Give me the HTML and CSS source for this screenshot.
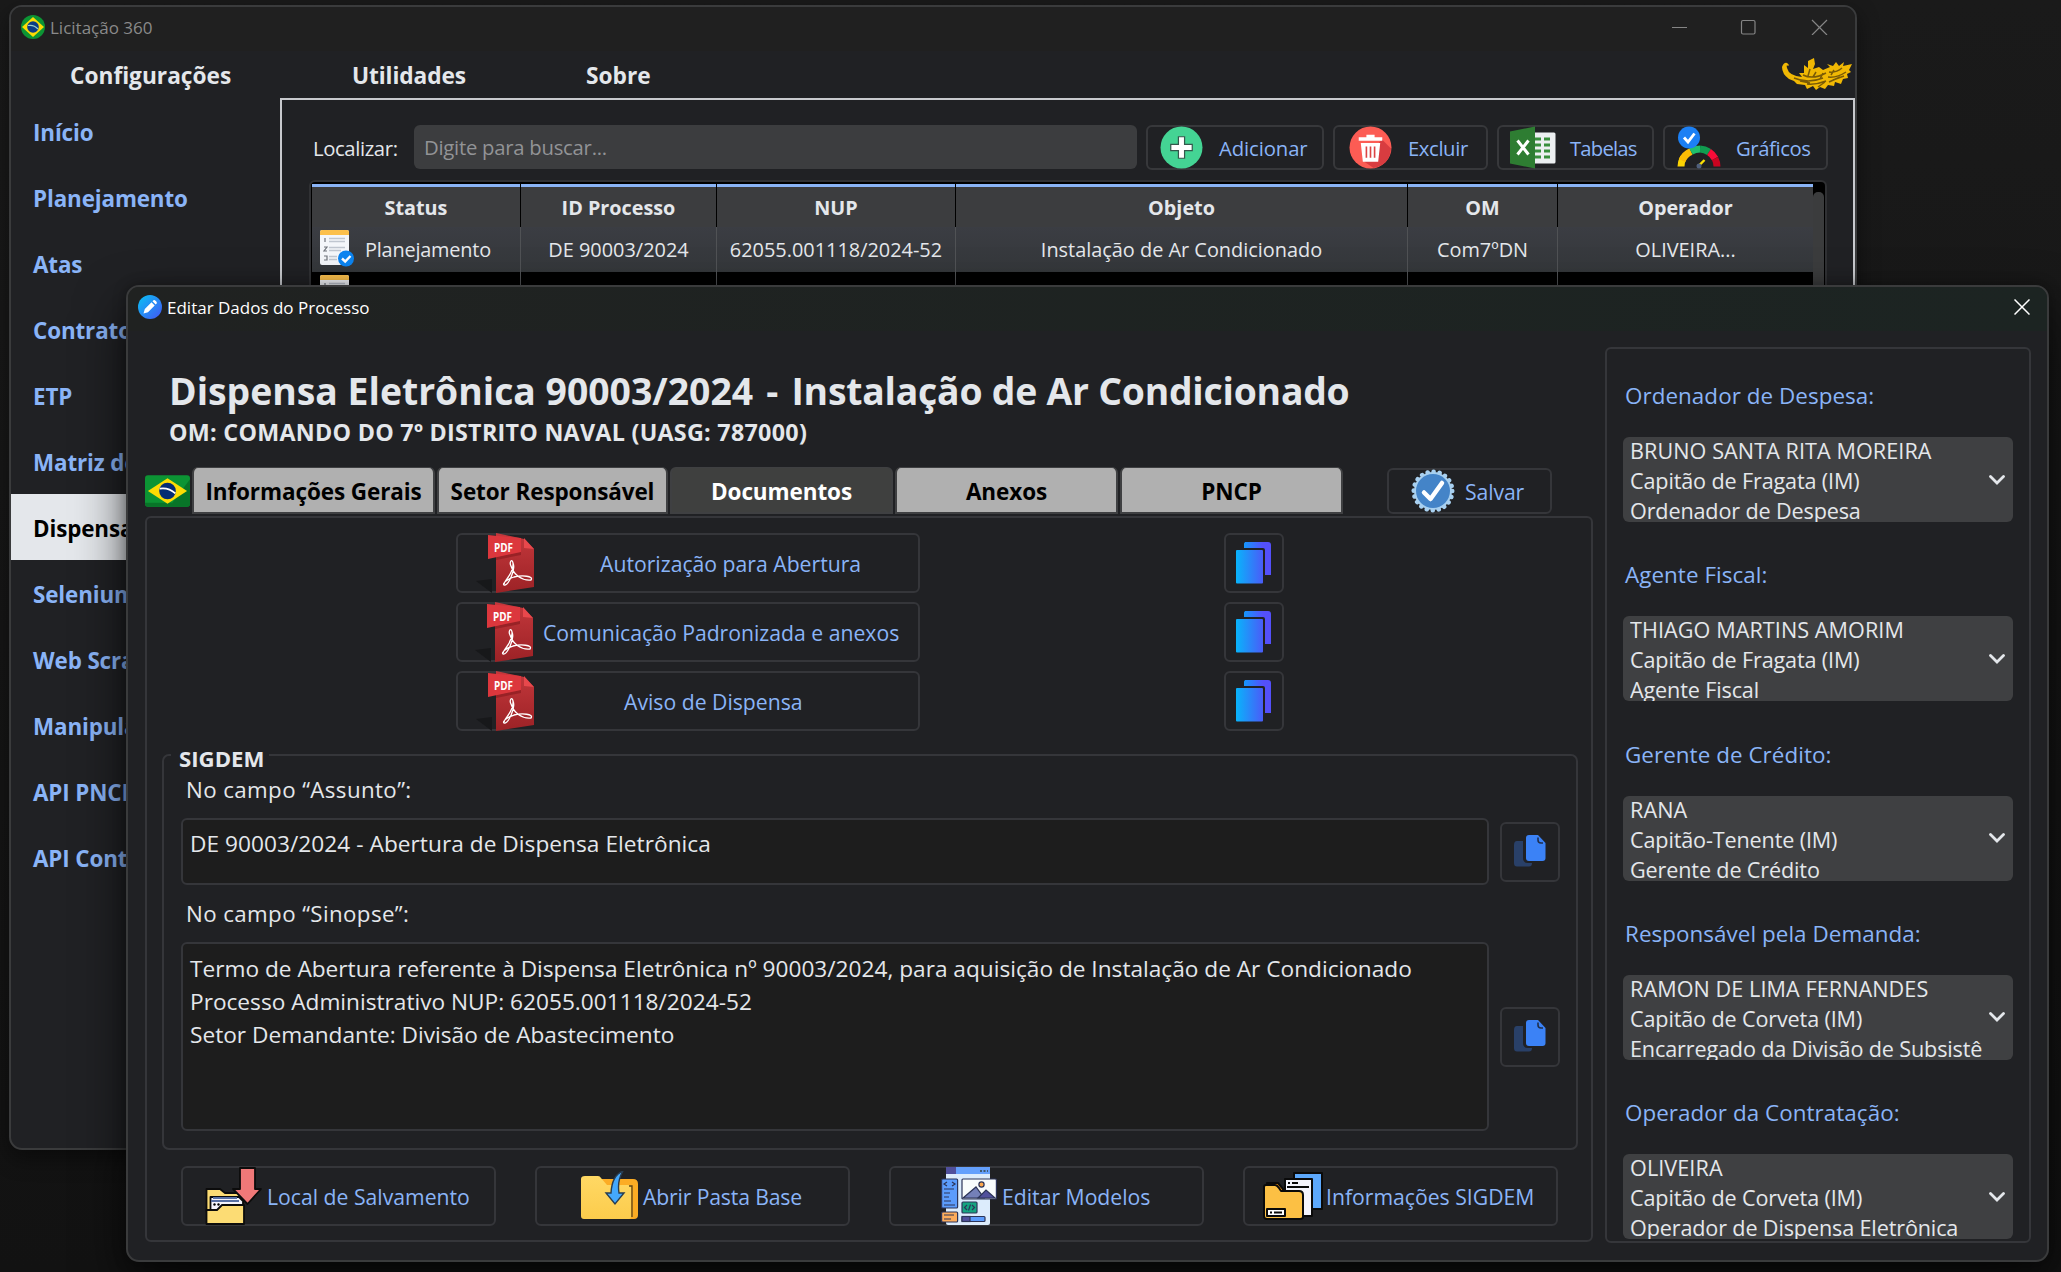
FILE: index.html
```html
<!DOCTYPE html>
<html lang="pt-BR">
<head>
<meta charset="utf-8">
<title>Licitação 360</title>
<link rel="stylesheet" href="styles.css">
</head>
<body>
<svg class="defs" width="0" height="0" aria-hidden="true">
  <defs>
    <linearGradient id="gPdf" x1="0" y1="0" x2="0" y2="1"><stop offset="0" stop-color="#c4383c"/><stop offset="1" stop-color="#9c2226"/></linearGradient>
    <linearGradient id="gCopy" x1="0" y1="0" x2="1" y2="0"><stop offset="0" stop-color="#08b4fb"/><stop offset="1" stop-color="#4a5cf8"/></linearGradient>
    <linearGradient id="gCopyBack" x1="0" y1="0" x2="1" y2="0"><stop offset="0" stop-color="#1496fb"/><stop offset=".7" stop-color="#5450fa"/></linearGradient>
    <linearGradient id="gPen" x1="0" y1="0" x2="1" y2="1"><stop offset="0" stop-color="#08c4f4"/><stop offset="1" stop-color="#4454f4"/></linearGradient>
    <linearGradient id="gFolder" x1="0" y1="0" x2="0" y2="1"><stop offset="0" stop-color="#ffd864"/><stop offset="1" stop-color="#fccc4c"/></linearGradient>
  </defs>
  <symbol id="pdf" viewBox="0 0 60 60">
    <path d="M0 48L16 46V60Z" fill="#17181a"/>
    <path d="M20 0L48 6L58 16V54L20 60Z" fill="url(#gPdf)"/>
    <path d="M48 5L58 16L48 15Z" fill="#e8484c"/>
    <path d="M20 24L45 18V22L20 27Z" fill="#982226"/>
    <path d="M12 2L45 5V19L12 26Z" fill="#dc373d"/>
    <text x="27.500" y="18.500" text-anchor="middle" font-family="Open Sans" font-size="12" font-weight="700" fill="#fff" textLength="19" lengthAdjust="spacingAndGlyphs">PDF</text>
    <path d="M28 51C29 46 38 41 37 30C36 25 33 29 35 33C38 42 46 48 55 47C58 43 46 42 38 44C31 46 26 51 28 52C32 53 40 37 37 30" fill="none" stroke="#fff" stroke-width="1.300"/>
  </symbol>
  <symbol id="pages" viewBox="0 0 36 42">
    <path d="M9 0H32Q35 0 35 3V33H29V8Q29 6 27 6H8V1.500Z" fill="url(#gCopyBack)"/>
    <rect x="0" y="8" width="27" height="33.500" rx="1" fill="url(#gCopy)"/>
  </symbol>
  <symbol id="copy" viewBox="0 0 32 32">
    <path d="M3 6H9V23Q9 28 14 28H18Q18 31.500 15 31.500H3Q0 31.500 0 28V10Q0 6 3 6Z" fill="#294068"/>
    <path d="M15 0H24L31.500 8V23Q31.500 26 28.500 26H15Q12 26 12 23V3Q12 0 15 0Z" fill="#3b82f6"/>
    <path d="M24 2.500V5Q24 8 27 8H29" fill="none" stroke="#202f4c" stroke-width="1.600"/>
  </symbol>
  <symbol id="list" viewBox="0 0 35 37">
    <rect width="29" height="35" rx="2" fill="#f4f6fa"/>
    <path d="M0 2Q0 0 2 0H27Q29 0 29 2V5H0Z" fill="#fcc04c"/>
    <path d="M5 8V12M4 17H7L4 21H7M4 26H7V30H4" stroke="#70747c" stroke-width="1.200" fill="none"/>
    <path d="M9 8.500H25M9 11.500H25M9 17.500H25M9 20.500H21M9 26.500H17M9 29.500H17" stroke="#c0c6d0" stroke-width="1.400"/>
    <circle cx="26" cy="28.500" r="8" fill="#0c84f0"/>
    <path d="M22 28.500L25.200 31.500L30.500 26" fill="none" stroke="#fff" stroke-width="2.400"/>
  </symbol>
  <symbol id="chevron" viewBox="0 0 16 10"><path d="M1.500 1.500L8 8L14.500 1.500" fill="none" stroke="#e4e7eb" stroke-width="2.800" stroke-linecap="round"/></symbol>
  <symbol id="flagmark" viewBox="0 0 46 32">
    <path d="M23 3L43 16L23 29L3 16Z" fill="#fcdc04"/>
    <circle cx="23" cy="16" r="8.500" fill="#042c74"/>
    <path d="M15 13.500Q24 12 31 18.500" fill="none" stroke="#fff" stroke-width="1.800"/>
  </symbol>
</svg>

<main class="desktop">
  <section class="window main-window">
    <header class="titlebar">
      <svg class="app-icon" viewBox="0 0 24 24"><circle cx="12" cy="12" r="12" fill="#0c9434"/><path d="M12 2L23 12L12 22L1 12Z" fill="#fcdc04"/><circle cx="12" cy="12" r="5.800" fill="#0c3c84"/><path d="M7 10.500Q13 9.500 17 14" fill="none" stroke="#9cc" stroke-width="1.200"/></svg>
      <span class="title muted">Licitação 360</span>
      <svg class="win-controls" viewBox="0 0 158 16"><path d="M1 8.500H16M141 1L156 16M156 1L141 16" stroke="#858585" stroke-width="1.200"/><rect x="70.500" y="1.500" width="13.500" height="13.500" rx="1.500" fill="none" stroke="#858585" stroke-width="1.200"/></svg>
    </header>
    <nav class="menu">
      <span class="menu-config">Configurações</span><span class="menu-util">Utilidades</span><span class="menu-about">Sobre</span>
      <svg class="crest" viewBox="0 0 71 32">
        <path d="M6 8Q4 6 5 10Q7 18 20 19L17 15L22 15L22 7L26 10L26 3L32 0L33 6L31 11L37 9L41 12L48 9L45 6L51 8L54 4L57 8L62 4L61 8L70 6L67 12L69 14L65 16L66 20L61 21L59 26L53 24L52 28L46 27L43 31L38 29L34 32L31 28L25 31L23 27L15 26L12 23L7 21Q0 16 0 9Q2 4 5 5Q8 7 6 8Z" fill="#f0b804"/>
        <path d="M12 20Q26 26 41 20M21 17Q31 22 44 15M28 11L26 18M34 14L31 19M41 15L38 21M47 14Q54 15 60 10M46 19Q55 20 64 14M25 26Q34 27 44 23M36 29L43 24M47 24L58 19M52 12L49 17M18 23L28 25M51 22L62 18" fill="none" stroke="#795a06" stroke-width="1.500"/>
      </svg>
    </nav>
    <div class="main-body">
      <aside class="sidebar">
        <a>Início</a><a>Planejamento</a><a>Atas</a><a>Contratos</a><a>ETP</a><a>Matriz de</a><a class="active">Dispensa</a><a>Selenium</a><a>Web Scraping</a><a>Manipular</a><a>API PNCP</a><a>API Contratos</a>
      </aside>
      <div class="content">
        <div class="toolbar">
          <label>Localizar:</label>
          <div class="search">Digite para buscar...</div>
          <button class="tool t-add">
            <svg viewBox="0 0 42 42"><circle cx="21" cy="21" r="20.500" fill="#44d494"/><path d="M18 10.500H24V18H31.500V24H24V31.500H18V24H10.500V18H18Z" fill="#fff" stroke="#34584c" stroke-width="1.200"/></svg>
            <span>Adicionar</span></button>
          <button class="tool t-del">
            <svg viewBox="0 0 42 42"><circle cx="21" cy="21" r="20.500" fill="#fc5c54"/><path d="M32 13L41 22Q40 38 24 41L15 35Z" fill="#d83c40"/><path d="M9.500 11H17V8.500H25V11H32.500V14.500H9.500ZM11.500 16.500H30.500L28.500 35H13.500Z" fill="#fff"/><path d="M17 20V31M21 20V31M25 20V31" stroke="#dc4444" stroke-width="1.600"/></svg>
            <span>Excluir</span></button>
          <button class="tool t-tab">
            <svg viewBox="0 0 46 42"><rect x="20" y="6" width="25.500" height="31" rx="1.500" fill="#eceff1"/><path d="M0 5L25 0V42L0 37Z" fill="#2e7d32"/><path d="M7.500 14L18.500 28M18.500 14L7.500 28" stroke="#fff" stroke-width="3"/><path d="M25 12.500H31M34 12.500H40M25 18.500H31M34 18.500H40M25 24.500H31M34 24.500H40M25 30.500H31M34 30.500H40" stroke="#388e3c" stroke-width="3"/></svg>
            <span>Tabelas</span></button>
          <button class="tool t-gra">
            <svg viewBox="0 0 44 42"><g fill="none" stroke-width="7"><path d="M4 40A18 18 0 0 1 6.500 31" stroke="#fcd404"/><path d="M5 34A18 18 0 0 1 14 25" stroke="#fcbc04"/><path d="M14 25A18 18 0 0 1 23 22.500" stroke="#20c06c"/><path d="M23 22.500A18 18 0 0 1 32 25.500" stroke="#109c50"/><path d="M32 25.500A18 18 0 0 1 38 32" stroke="#f80c38"/><path d="M38 32A18 18 0 0 1 40 40" stroke="#c80420"/></g><path d="M22 39L27.500 33.500" stroke="#fce004" stroke-width="2.400"/><circle cx="22" cy="39.500" r="2.500" fill="#50607c"/><circle cx="12" cy="11" r="11" fill="#1c80f4"/><path d="M7 11L11 15.500L17.500 7" fill="none" stroke="#fff" stroke-width="2.800"/></svg>
            <span>Gráficos</span></button>
        </div>
        <div class="table-frame">
          <div class="table">
            <div class="row head"><b>Status</b><b>ID Processo</b><b>NUP</b><b>Objeto</b><b>OM</b><b>Operador</b></div>
            <div class="row selected"><span class="status"><svg class="i-list"><use href="#list"/></svg>Planejamento</span><span>DE 90003/2024</span><span>62055.001118/2024-52</span><span>Instalação de Ar Condicionado</span><span>Com7ºDN</span><span>OLIVEIRA...</span></div>
            <div class="row"><span class="status"><svg class="i-list"><use href="#list"/></svg></span><span></span><span></span><span></span><span></span><span></span></div>
          </div>
          <div class="scroll-thumb"></div>
        </div>
      </div>
    </div>
  </section>

  <section class="window dialog">
    <header class="titlebar dialog-bar">
      <svg class="app-icon" viewBox="0 0 24 24"><circle cx="12" cy="12" r="12" fill="url(#gPen)"/><path d="M5.500 18.500L6.800 14L13.500 7.300L16.700 10.500L10 17.200ZM14.500 6.300L15.500 5.300Q16.500 4.800 17.500 5.700L18.300 6.500Q19.200 7.500 18.700 8.500L17.700 9.500Z" fill="#fff"/></svg>
      <span class="title">Editar Dados do Processo</span>
      <svg class="close" viewBox="0 0 16 16"><path d="M.5 .5L15.500 15.500M15.500 .5L.5 15.500" stroke="#fff" stroke-width="1.500"/></svg>
    </header>
    <div class="dialog-body">
      <div class="left">
        <h1>Dispensa Eletrônica 90003/2024<span class="dash"> - </span><span class="subject">Instalação de Ar Condicionado</span></h1>
        <h2>OM: COMANDO DO 7º DISTRITO NAVAL (UASG: 787000)</h2>
        <div class="tabs">
          <svg class="flag" viewBox="0 0 46 32"><rect width="46" height="32" rx="3" fill="#0c9434"/><path d="M46 4V29Q46 32 43 32H3Q0 32 0 28H28Z" fill="#087428"/><use href="#flagmark" width="46" height="32"/></svg>
          <div class="tab w1">Informações Gerais</div><div class="tab w2">Setor Responsável</div><div class="tab w3 on">Documentos</div><div class="tab w4">Anexos</div><div class="tab w5">PNCP</div>
          <button class="btn save">
            <svg viewBox="0 0 44 44"><circle cx="22" cy="22" r="19" fill="#a8d0f0"/><circle cx="22" cy="22" r="19.300" fill="none" stroke="#a8d0f0" stroke-width="4.500" stroke-linecap="round" stroke-dasharray=".1 5.963"/><circle cx="22" cy="22" r="17" fill="#4484c8"/><path d="M13 23.500L19.500 30L31 14" fill="none" stroke="#fff" stroke-width="4.500" stroke-linecap="round" stroke-linejoin="round"/></svg>
            <span>Salvar</span></button>
        </div>
        <div class="pane">
          <div class="docs">
            <div class="doc"><button class="btn doc-btn d1"><svg class="i-pdf"><use href="#pdf"/></svg><span>Autorização para Abertura</span></button><button class="btn sq"><svg class="i-pages"><use href="#pages"/></svg></button></div>
            <div class="doc"><button class="btn doc-btn d2"><svg class="i-pdf"><use href="#pdf"/></svg><span>Comunicação Padronizada e anexos</span></button><button class="btn sq"><svg class="i-pages"><use href="#pages"/></svg></button></div>
            <div class="doc"><button class="btn doc-btn d3"><svg class="i-pdf"><use href="#pdf"/></svg><span>Aviso de Dispensa</span></button><button class="btn sq"><svg class="i-pages"><use href="#pages"/></svg></button></div>
          </div>
          <fieldset class="group">
            <legend>SIGDEM</legend>
            <div class="field-label">No campo “Assunto”:</div>
            <div class="field"><div class="text short">DE 90003/2024 - Abertura de Dispensa Eletrônica</div><button class="btn sq"><svg class="i-copy"><use href="#copy"/></svg></button></div>
            <div class="field-label second">No campo “Sinopse”:</div>
            <div class="field"><div class="text long">Termo de Abertura referente à Dispensa Eletrônica nº 90003/2024, para aquisição de Instalação de Ar Condicionado<br>Processo Administrativo NUP: 62055.001118/2024-52<br>Setor Demandante: Divisão de Abastecimento</div><button class="btn sq"><svg class="i-copy"><use href="#copy"/></svg></button></div>
          </fieldset>
          <div class="actions">
            <button class="btn act a1">
              <svg viewBox="0 0 58 58"><g stroke="#0c0c0c" stroke-width="1.800" stroke-linejoin="round"><path d="M1.500 22H15L20 26H38V44H1.500Z" fill="#fcdc74"/><path d="M5.500 43V30H34L38 34V43Z" fill="#f4f4fc"/><path d="M6 34H34M8 31H32" stroke="#5870a4"/><path d="M1.500 43H12L17 38H39V57H1.500Z" fill="#fcdc74"/><path d="M35 1H50V22H56L42.500 37L28 22H35Z" fill="#f07878"/></g><circle cx="9.500" cy="37.500" r="1.200"/><circle cx="13.500" cy="37.500" r="1.200"/></svg>
              <span>Local de Salvamento</span></button>
            <button class="btn act a2">
              <svg viewBox="0 0 57 58"><path d="M20 8H52Q57 8 57 13V44Q57 48 53 48H48V16H22Z" fill="#fcac24"/><path d="M4 5H17Q19 5 20 7L26 14H47Q50 14 50 17V46Q50 48 48 48H3Q0 48 0 45V8Q0 5 4 5Z" fill="url(#gFolder)"/><path d="M48 15H51V46" fill="none" stroke="#5c4418" stroke-width="1.300"/><path d="M42 0Q31 4 30 22H25L34 33L43 22H38Q36 10 42 0Z" fill="#44a8fc" stroke="#283c50" stroke-width="1.400"/></svg>
              <span>Abrir Pasta Base</span></button>
            <button class="btn act a3">
              <svg viewBox="0 0 56 58"><rect x="5" y="0" width="44" height="58" rx="2" fill="#dcecfc"/><path d="M5 0H49V7H5Z" fill="#64a0fc"/><path d="M5 0H15V7H5Z" fill="#50509c"/><path d="M39 4H47" stroke="#344" stroke-width="1.500" stroke-dasharray="2 1.500"/><g stroke="#2c3458" stroke-width="1.200"><rect x=".6" y="12" width="16" height="29" rx="1" fill="#5c9cfc"/><rect x="21" y="12" width="34.400" height="20" rx="1" fill="#f8fcfc"/><path d="M22 31L35 20L43 31Z" fill="#7480b8"/><path d="M37 31L45 23L54 31Z" fill="#50509c"/><circle cx="40.500" cy="17.500" r="2.600" fill="#fca84c"/><rect x="21" y="35" width="15" height="11" rx="1" fill="#14a480"/><rect x=".6" y="45" width="16" height="10" rx="1" fill="#fcac5c"/><rect x="21" y="49.500" width="23" height="5" rx="1" fill="#5c9cfc"/><rect x="21" y="49.500" width="8" height="5" fill="#50509c"/><path d="M6 15L3 17L6 19M11 15L14 17L11 19M3 22H13M3 26H9M3 30H8M3 34H10M3 38H14M3 48H13M3 52H10M26 38L23.500 40.500L26 43M31 38L33.500 40.500L31 43M29.500 37.500L27.500 43.500" fill="none"/></g></svg>
              <span>Editar Modelos</span></button>
            <button class="btn act a4">
              <svg viewBox="0 0 60 50"><g stroke="#0a0a0a" stroke-width="2" stroke-linejoin="round"><path d="M31 2H59V38H31Z" fill="#5ca8fc"/><path d="M22 8H49V45H22Z" fill="#f4f4fc"/><path d="M4 15V12H15L20 18V22Z" fill="#f49414"/><path d="M1 16Q1 14 3 14H12Q14 14 16 17L18 20H36Q40 20 40 24V46Q40 48 37 48H4Q1 48 1 45Z" fill="#fcc044"/><path d="M4 38H22V45H4Z" fill="#fff"/><path d="M25 12H27M29 12H35M24 16H46M7 41.500H9M11 41.500H19"/></g></svg>
              <span>Informações SIGDEM</span></button>
          </div>
        </div>
      </div>
      <aside class="agents">
        <div class="agent"><label>Ordenador de Despesa:</label><div class="combo"><p><span class="name">BRUNO SANTA RITA MOREIRA</span><br>Capitão de Fragata (IM)<br>Ordenador de Despesa</p><svg class="chev"><use href="#chevron"/></svg></div></div>
        <div class="agent"><label>Agente Fiscal:</label><div class="combo"><p><span class="name">THIAGO MARTINS AMORIM</span><br>Capitão de Fragata (IM)<br>Agente Fiscal</p><svg class="chev"><use href="#chevron"/></svg></div></div>
        <div class="agent"><label>Gerente de Crédito:</label><div class="combo"><p><span class="name">RANA</span><br>Capitão-Tenente (IM)<br>Gerente de Crédito</p><svg class="chev"><use href="#chevron"/></svg></div></div>
        <div class="agent"><label>Responsável pela Demanda:</label><div class="combo"><p><span class="name">RAMON DE LIMA FERNANDES</span><br>Capitão de Corveta (IM)<br>Encarregado da Divisão de Subsistê</p><svg class="chev"><use href="#chevron"/></svg></div></div>
        <div class="agent"><label>Operador da Contratação:</label><div class="combo"><p><span class="name">OLIVEIRA</span><br>Capitão de Corveta (IM)<br>Operador de Dispensa Eletrônica</p><svg class="chev"><use href="#chevron"/></svg></div></div>
      </aside>
    </div>
  </section>
</main>
</body>
</html>
```
FILE: styles.css
```css
* { box-sizing: border-box; margin: 0; padding: 0; }
body { background: #171717; font-family: "Open Sans", "Noto Sans", sans-serif; color: #e4e7eb; }
.defs { position: absolute; }
button { font: inherit; color: #8ab4f7; background: none; }
svg { flex: none; display: block; }

.desktop { position: relative; width: 2061px; height: 1272px; overflow: hidden; background: linear-gradient(#1a1a1a, #121212); }
.window { position: absolute; border: 2px solid #3a3b3c; border-radius: 13px; background: #202124; overflow: hidden; display: flex; flex-direction: column; }
.main-window { left: 9px; top: 5px; width: 1848px; height: 1145px; box-shadow: 0 8px 22px rgba(0, 0, 0, .45); }
.dialog { left: 126px; top: 285px; width: 1923px; height: 977px; box-shadow: 0 22px 50px rgba(0, 0, 0, .65), 0 0 14px rgba(0, 0, 0, .3); }

.titlebar { height: 44px; flex: none; display: flex; align-items: center; padding: 0 27px 4px 10px; background: #202020; }
.dialog-bar { padding: 0 17px 4px 10px; background: linear-gradient(90deg, #202221, #1c2422); }
.app-icon { width: 24px; height: 24px; }
.title { font-size: 17px; margin-left: 5px; flex: 1; line-height: 24px; padding-top: 2px; color: #fff; }
.title.muted { color: #8a8a8a; }
.win-controls { width: 158px; height: 16px; margin-right: -1px; }
.close { width: 16px; height: 16px; }

.menu { height: 47px; flex: none; display: flex; padding-left: 59px; font-weight: 700; font-size: 22.700px; line-height: 50px; }
.menu-config { width: 282px; }
.menu-util { width: 234px; letter-spacing: -.1px; }
.menu-about { flex: 1; }
.crest { width: 71px; height: 32px; margin: 7px 2px 0 0; }

.main-body { flex: 1; display: flex; }
.sidebar { width: 270px; flex: none; margin-left: -1px; }
.sidebar a { display: block; height: 66px; line-height: 70px; padding-left: 23px; font-weight: 700; font-size: 22.400px; letter-spacing: -.12px; color: #8ab4f7; white-space: nowrap; overflow: hidden; }
.sidebar a.active { background: #e4e7eb; color: #000; }
.content { width: 1575px; border: 2px solid #c8cace; padding: 25px 25px 0 27px; }

.toolbar { display: flex; gap: 9px; padding-left: 4px; font-size: 20.300px; height: 45px; line-height: 47px; }
.toolbar label { width: 92px; letter-spacing: -.38px; }
.search { width: 723px; height: 44px; border-radius: 6px; background: #3c3d3f; color: #929396; padding-left: 10px; letter-spacing: -.25px; line-height: 45px; }
.tool { border: 2px solid #37383b; border-radius: 6px; display: flex; align-items: center; line-height: 41px; letter-spacing: -.1px; }
.tool svg { height: 43px; }
.tool span { padding-top: 2px; }
.t-add { width: 178px; padding-left: 12px; } .t-add svg { width: 43px; margin-right: 16px; }
.t-del { width: 155px; padding-left: 14px; letter-spacing: -.4px; } .t-del svg { width: 43px; margin-right: 16px; }
.t-tab { width: 157px; padding-left: 11px; letter-spacing: -.8px; } .t-tab svg { width: 46px; margin-right: 14px; }
.t-gra { width: 165px; padding-left: 12px; letter-spacing: -.4px; } .t-gra svg { width: 44px; margin-right: 15px; }

.table-frame { margin-top: 10px; width: 1518px; height: 300px; border: 2px solid #303134; border-radius: 6px; background: #000; padding: 2px 0 0 1px; display: flex; }
.table { width: 1501px; }
.row { display: grid; grid-template-columns: 208px 195px 238px 451px 149px 255px; gap: 1px; height: 45px; font-size: 19.900px; line-height: 46px; text-align: center; background: #505255; }
.row > * { background: #000; border-bottom: 1px solid #505255; display: block; }
.row.head { height: 43px; background: #000; }
.head > b { background: #3c3d3f; border: 0; border-top: 3px solid #8ab4f7; line-height: 42px; font-size: 19.800px; }
.selected > span { background: linear-gradient(#3b3d43, #34373a); }
.row > .status { display: flex; padding-left: 8px; text-align: left; letter-spacing: -.2px; }
.i-list { width: 35px; height: 37px; margin: 3px 10px 0 0; }
.scroll-thumb { width: 11px; margin-top: 8px; border-radius: 5px 5px 0 0; background: #3b3c3d; }

.dialog-body { flex: 1; display: flex; gap: 12px; padding-left: 17px; }
.left { width: 1448px; flex: none; padding-top: 35px; }
h1 { font-size: 37.330px; line-height: 50px; padding-left: 24px; white-space: nowrap; }
.dash { padding: 0 3.500px; }
.subject { letter-spacing: -.22px; }
h2 { font-size: 23.300px; letter-spacing: .27px; line-height: 32px; padding-left: 24px; }
.tabs { display: flex; gap: 2px; margin-top: 19px; height: 47px; font-weight: 700; font-size: 22.500px; line-height: 48px; text-align: center; }
.flag { width: 45px; height: 32px; margin-top: 8px; }
.tab { background: #b0b0b0; color: #000; border: 2px solid #3f4042; border-top-width: 1px; border-radius: 6px 6px 0 0; height: 47px; letter-spacing: -.1px; }
.tab.on { background: #3f403f; color: #fff; }
.w1 { width: 243px; } .w2 { width: 231px; } .w3 { width: 223px; } .w4 { width: 223px; } .w5 { width: 223px; }
.btn { border: 2px solid #35363a; border-radius: 6px; display: flex; align-items: center; font-size: 21.200px; font-weight: 400; line-height: 40px; white-space: nowrap; }
.save { width: 165px; height: 46px; margin: 1px 0 0 42px; padding-left: 22px; }
.save svg { width: 44px; height: 44px; margin-right: 10px; }
.save span { padding-top: 2px; letter-spacing: -.1px; }

.pane { margin-top: 2px; height: 726px; border: 2px solid #35363a; border-radius: 6px; padding-top: 15px; }
.docs { display: flex; flex-direction: column; gap: 9px; }
.doc { display: flex; gap: 304px; padding-left: 309px; }
.doc-btn { width: 464px; height: 60px; padding-left: 18px; }
.doc-btn span { padding-top: 2px; }
.d1 span { margin-left: 64px; }
.d2 { padding-left: 17px; }
.d2 span { margin-left: 8px; }
.d3 span { margin-left: 88px; }
.i-pdf { width: 60px; height: 60px; }
.sq { width: 60px; height: 60px; flex: none; justify-content: center; }
.i-pages { width: 36px; height: 42px; }
.i-copy { width: 32px; height: 32px; margin-bottom: 2px; }

.group { margin: 6px 0 0 15px; width: 1416px; border: 2px solid #35363a; border-radius: 7px; padding: 0 7px 17px; font-size: 22.670px; }
legend { padding: 8px 5px 0 8px; line-height: 28px; font-weight: 700; font-size: 22.200px; }
.field-label { line-height: 32px; margin: 1px 0 12px; padding-left: 15px; font-size: 22.300px; letter-spacing: .4px; }
.field-label.second { margin-top: 13px; }
.field { display: flex; align-items: center; gap: 11px; padding-left: 10px; }
.text { width: 1308px; border: 2px solid #35363a; border-radius: 6px; background: #1d1d1d; padding: 7px 0 0 7px; line-height: 33px; white-space: nowrap; }
.short { height: 67px; font-size: 22.670px; letter-spacing: .04px; }
.long { height: 189px; padding-top: 8px; }

.actions { display: flex; gap: 39px; margin: 16px 0 0 34px; }
.act { width: 315px; height: 60px; }
.act span { padding-top: 2px; }
.act svg { height: 58px; }
.a1 { padding-left: 22px; } .a1 svg { width: 58px; margin-right: 4px; }
.a2 { padding-left: 44px; letter-spacing: -.15px; } .a2 svg { width: 57px; margin: 8px 5px 0 0; }
.a3 { padding-left: 50px; } .a3 svg { width: 56px; margin-right: 5px; }
.a4 { padding-left: 18px; } .a4 svg { width: 60px; height: 50px; margin-right: 3px; }

.agents { width: 426px; height: 896px; margin-top: 16px; border: 2px solid #35363a; border-radius: 6px; padding: 31px 0 0 16px; }
.agent { height: 179.250px; }
.agent label { display: block; line-height: 32px; height: 30px; padding-left: 2px; font-size: 22.400px; letter-spacing: .06px; }
.agents label { color: #8ab4f7; }
.combo { margin-top: 27px; width: 390px; height: 85px; border-radius: 6px; background: #3f4042; overflow: hidden; display: flex; align-items: center; gap: 5px; padding-left: 7px; }
.combo p { width: 354px; height: 87px; flex: none; overflow: hidden; white-space: nowrap; font-size: 21.600px; line-height: 30px; letter-spacing: -.14px; }
.name { letter-spacing: .08px; }
.chev { width: 16px; height: 10px; }
```
